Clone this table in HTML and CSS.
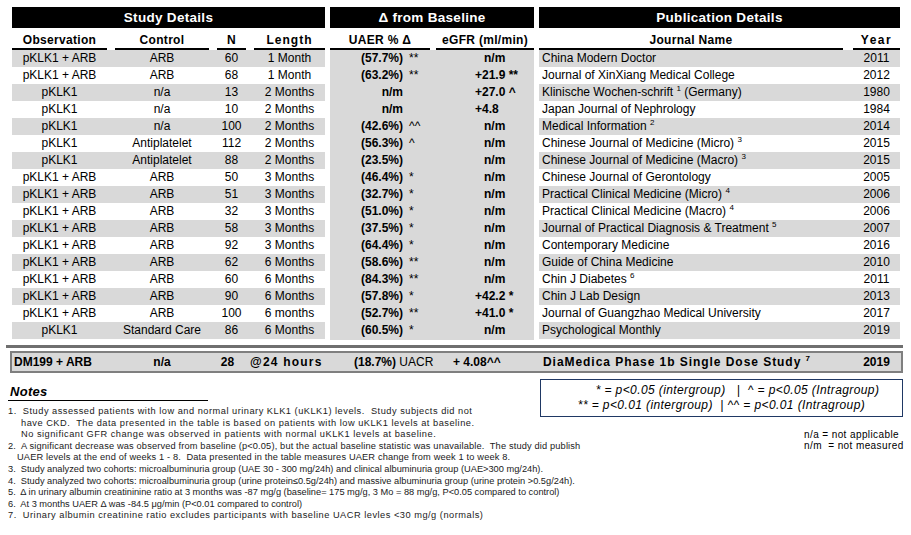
FILE: index.html
```html
<!DOCTYPE html>
<html lang="en">
<head>
<meta charset="utf-8">
<title>Study Summary</title>
<link rel="stylesheet" href="styles.css">
</head>
<body>
<div class="page">
  <div class="table">
    <section class="sec study">
      <div class="bar">Study Details</div>
      <div class="row head"><span>Observation</span><span>Control</span><span>N</span><span class="wide">Length</span></div>
      <div class="row g"><span>pKLK1 + ARB</span><span>ARB</span><span>60</span><span>1 Month</span></div>
      <div class="row"><span>pKLK1 + ARB</span><span>ARB</span><span>68</span><span>1 Month</span></div>
      <div class="row g"><span>pKLK1</span><span>n/a</span><span>13</span><span>2 Months</span></div>
      <div class="row"><span>pKLK1</span><span>n/a</span><span>10</span><span>2 Months</span></div>
      <div class="row g"><span>pKLK1</span><span>n/a</span><span>100</span><span>2 Months</span></div>
      <div class="row"><span>pKLK1</span><span>Antiplatelet</span><span>112</span><span>2 Months</span></div>
      <div class="row g"><span>pKLK1</span><span>Antiplatelet</span><span>88</span><span>2 Months</span></div>
      <div class="row"><span>pKLK1 + ARB</span><span>ARB</span><span>50</span><span>3 Months</span></div>
      <div class="row g"><span>pKLK1 + ARB</span><span>ARB</span><span>51</span><span>3 Months</span></div>
      <div class="row"><span>pKLK1 + ARB</span><span>ARB</span><span>32</span><span>3 Months</span></div>
      <div class="row g"><span>pKLK1 + ARB</span><span>ARB</span><span>58</span><span>3 Months</span></div>
      <div class="row"><span>pKLK1 + ARB</span><span>ARB</span><span>92</span><span>3 Months</span></div>
      <div class="row g"><span>pKLK1 + ARB</span><span>ARB</span><span>62</span><span>6 Months</span></div>
      <div class="row"><span>pKLK1 + ARB</span><span>ARB</span><span>60</span><span>6 Months</span></div>
      <div class="row g"><span>pKLK1 + ARB</span><span>ARB</span><span>90</span><span>6 Months</span></div>
      <div class="row"><span>pKLK1 + ARB</span><span>ARB</span><span>100</span><span>6 months</span></div>
      <div class="row g"><span>pKLK1</span><span>Standard Care</span><span>86</span><span>6 Months</span></div>
    </section>

    <section class="sec delta">
      <div class="bar">Δ from Baseline</div>
      <div class="row head"><span>UAER % Δ</span><span>eGFR (ml/min)</span></div>
      <div class="body">
        <div class="row"><span class="u"><b>(57.7%)</b><i>**</i></span><span class="e nm">n/m</span></div>
        <div class="row"><span class="u"><b>(63.2%)</b><i>**</i></span><span class="e">+21.9 **</span></div>
        <div class="row"><span class="u"><b>n/m</b><i></i></span><span class="e">+27.0 ^</span></div>
        <div class="row"><span class="u"><b>n/m</b><i></i></span><span class="e">+4.8</span></div>
        <div class="row"><span class="u"><b>(42.6%)</b><i>^^</i></span><span class="e nm">n/m</span></div>
        <div class="row"><span class="u"><b>(56.3%)</b><i>^</i></span><span class="e nm">n/m</span></div>
        <div class="row"><span class="u"><b>(23.5%)</b><i></i></span><span class="e nm">n/m</span></div>
        <div class="row"><span class="u"><b>(46.4%)</b><i>*</i></span><span class="e nm">n/m</span></div>
        <div class="row"><span class="u"><b>(32.7%)</b><i>*</i></span><span class="e nm">n/m</span></div>
        <div class="row"><span class="u"><b>(51.0%)</b><i>*</i></span><span class="e nm">n/m</span></div>
        <div class="row"><span class="u"><b>(37.5%)</b><i>*</i></span><span class="e nm">n/m</span></div>
        <div class="row"><span class="u"><b>(64.4%)</b><i>*</i></span><span class="e nm">n/m</span></div>
        <div class="row"><span class="u"><b>(58.6%)</b><i>**</i></span><span class="e nm">n/m</span></div>
        <div class="row"><span class="u"><b>(84.3%)</b><i>**</i></span><span class="e nm">n/m</span></div>
        <div class="row"><span class="u"><b>(57.8%)</b><i>*</i></span><span class="e">+42.2 *</span></div>
        <div class="row"><span class="u"><b>(52.7%)</b><i>**</i></span><span class="e">+41.0 *</span></div>
        <div class="row"><span class="u"><b>(60.5%)</b><i>*</i></span><span class="e nm">n/m</span></div>
      </div>
    </section>

    <section class="sec pub">
      <div class="bar">Publication Details</div>
      <div class="row head"><span>Journal Name</span><span class="wide2">Year</span></div>
      <div class="row g"><span class="j">China Modern Doctor</span><span class="y">2011</span></div>
      <div class="row"><span class="j">Journal of XinXiang Medical College</span><span class="y">2012</span></div>
      <div class="row g"><span class="j">Klinische Wochen-schrift <sup>1</sup> (Germany)</span><span class="y">1980</span></div>
      <div class="row"><span class="j">Japan Journal of Nephrology</span><span class="y">1984</span></div>
      <div class="row g"><span class="j">Medical Information <sup>2</sup></span><span class="y">2014</span></div>
      <div class="row"><span class="j">Chinese Journal of Medicine (Micro) <sup>3</sup></span><span class="y">2015</span></div>
      <div class="row g"><span class="j">Chinese Journal of Medicine (Macro) <sup>3</sup></span><span class="y">2015</span></div>
      <div class="row"><span class="j">Chinese Journal of Gerontology</span><span class="y">2005</span></div>
      <div class="row g"><span class="j">Practical Clinical Medicine (Micro) <sup>4</sup></span><span class="y">2006</span></div>
      <div class="row"><span class="j">Practical Clinical Medicine (Macro) <sup>4</sup></span><span class="y">2006</span></div>
      <div class="row g"><span class="j">Journal of Practical Diagnosis &amp; Treatment <sup>5</sup></span><span class="y">2007</span></div>
      <div class="row"><span class="j">Contemporary Medicine</span><span class="y">2016</span></div>
      <div class="row g"><span class="j">Guide of China Medicine</span><span class="y">2010</span></div>
      <div class="row"><span class="j">Chin J Diabetes <sup>6</sup></span><span class="y">2011</span></div>
      <div class="row g"><span class="j">Chin J Lab Design</span><span class="y">2013</span></div>
      <div class="row"><span class="j">Journal of Guangzhao Medical University</span><span class="y">2017</span></div>
      <div class="row g"><span class="j">Psychological Monthly</span><span class="y">2019</span></div>
    </section>
  </div>

  <div class="sep"></div>

  <div class="dm">
    <span class="c1">DM199 + ARB</span>
    <span class="c2">n/a</span>
    <span class="c3">28</span>
    <span class="c4">@24 hours</span>
    <span class="c5">(18.7%) <span class="reg">UACR</span></span>
    <span class="c6">+ 4.08^^</span>
    <span class="c7">DiaMedica Phase 1b Single Dose Study <sup>7</sup></span>
    <span class="c8">2019</span>
  </div>

  <div class="bottom">
    <div class="notes">
      <div class="notes-title">Notes</div>
      <div class="line wide">1.&nbsp; Study assessed patients with low and normal urinary KLK1 (uKLK1) levels.&nbsp; Study subjects did not</div>
      <div class="line wide in1">have CKD.&nbsp; The data presented in the table is based on patients with low uKLK1 levels at baseline.</div>
      <div class="line wide in1">No significant GFR change was observed in patients with normal uKLK1 levels at baseline.</div>
      <div class="line mid">2.&nbsp; A significant decrease was observed from baseline (p&lt;0.05), but the actual baseline statistic was unavailable.&nbsp; The study did publish</div>
      <div class="line mid in2">UAER levels at the end of weeks 1 - 8.&nbsp; Data presented in the table measures UAER change from week 1 to week 8.</div>
      <div class="line">3.&nbsp; Study analyzed two cohorts: microalbuminuria group (UAE 30 - 300 mg/24h) and clinical albuminuria group (UAE&gt;300 mg/24h).</div>
      <div class="line">4.&nbsp; Study analyzed two cohorts: microalbuminuria group (urine protein≤0.5g/24h) and massive albuminuria group (urine protein &gt;0.5g/24h).</div>
      <div class="line">5.&nbsp; Δ in urinary albumin creatininine ratio at 3 months was -87 mg/g (baseline= 175 mg/g, 3 Mo = 88 mg/g, P&lt;0.05 compared to control)</div>
      <div class="line">6.&nbsp; At 3 months UAER Δ was -84.5 μg/min (P&lt;0.01 compared to control)</div>
      <div class="line wide">7.&nbsp; Urinary albumin creatinine ratio excludes participants with baseline UACR levles &lt;30 mg/g (normals)</div>
    </div>
    <div class="side">
      <div class="legend">
        <div class="l1">* = p&lt;0.05 (intergroup)&nbsp;&nbsp;&nbsp;|&nbsp;&nbsp;^ = p&lt;0.05 (Intragroup)</div>
        <div>** = p&lt;0.01 (intergroup)&nbsp;&nbsp;|&nbsp;^^ = p&lt;0.01 (Intragroup)</div>
      </div>
      <div class="abbr">
        <div>n/a = not applicable</div>
        <div>n/m&nbsp; = not measured</div>
      </div>
    </div>
  </div>
</div>
</body>
</html>
```

FILE: styles.css
```css
* { box-sizing: border-box; }

body {
  margin: 0;
  background: #fff;
  color: #000;
  font-family: "Liberation Sans", Arial, sans-serif;
}

.page {
  width: 911px;
  height: 535px;
  overflow: hidden;
}

.table {
  display: flex;
  gap: 5px;
  margin: 7px 0 0 12px;
  align-items: flex-start;
}

.study { width: 313px; }
.delta { width: 204px; }
.pub { width: 361px; }

.bar {
  background: #000;
  color: #fff;
  font-weight: bold;
  font-size: 13.5px;
  height: 21px;
  line-height: 21px;
  text-align: center;
  letter-spacing: 0.3px;
}

.row {
  display: grid;
  height: 17px;
  line-height: 17px;
  font-size: 12px;
  white-space: nowrap;
}

.row.g { background: #d9d9d9; }

.study .row {
  grid-template-columns: 95px 94px 29px 71px;
  column-gap: 8px;
  text-align: center;
}

.row.head {
  height: 22px;
}

.row.head span {
  display: block;
  padding-top: 5px;
  line-height: 15px;
  border-bottom: 2px solid #000;
  font-weight: bold;
  letter-spacing: 0.3px;
  text-align: center;
}

.row.head .wide { letter-spacing: 1px; }
.row.head .wide2 { letter-spacing: 1.5px; }

/* Delta section */
.delta .row {
  grid-template-columns: 100px 98px;
  column-gap: 6px;
}

.delta .body {
  background: #d9d9d9;
  padding-bottom: 1px;
}

.u {
  display: grid;
  grid-template-columns: 73px auto;
}

.u b {
  text-align: right;
  font-weight: bold;
}

.u i {
  font-style: normal;
  padding-left: 6px;
}

.e {
  padding-left: 39px;
  font-weight: bold;
}

.e.nm { padding-left: 48px; }

/* Publication section */
.pub .row {
  grid-template-columns: 304px 47px;
  column-gap: 10px;
}

.j {
  padding-left: 3px;
  text-align: left;
}

.y { text-align: center; }

sup {
  font-size: 8px;
  line-height: 0;
  vertical-align: 5px;
}

/* Separator and DM row */
.sep {
  height: 3px;
  background: #6f6f6f;
  margin: 5px 8px 0 6px;
}

.dm {
  margin: 3px 8px 0 10px;
  border: 2px solid #7f7f7f;
  background: #d9d9d9;
  display: grid;
  grid-template-columns: 103px 98px 37px 80px 106px 103px 314px 47px;
  font-size: 12px;
  line-height: 18px;
  font-weight: bold;
  white-space: nowrap;
}

.dm .c1 { padding-left: 2px; }
.dm .c2 { text-align: center; padding-right: 4px; }
.dm .c3 { text-align: center; padding-right: 8px; }
.dm .c4 { letter-spacing: 1.2px; }
.dm .c5 { padding-left: 24px; }
.dm .c6 { padding-left: 17px; }
.dm .c7 { padding-left: 4px; letter-spacing: 0.95px; }
.dm .c8 { text-align: center; }
.dm .reg { font-weight: normal; }

/* Bottom */
.bottom {
  display: grid;
  grid-template-columns: minmax(0, 1fr) 363px;
  margin: 6px 8px 0 8px;
}

.notes {
  white-space: nowrap;
}

.notes-title {
  width: 200px;
  padding: 5px 0 0 2px;
  line-height: 16px;
  font-size: 13px;
  font-weight: bold;
  font-style: italic;
  letter-spacing: 0.3px;
  border-bottom: 1px solid #000;
  margin-bottom: 5px;
}

.line {
  font-size: 9.25px;
  line-height: 11.6px;
  color: #1a1a1a;
}

.line.wide { letter-spacing: 0.5px; }
.line.mid { letter-spacing: 0.15px; }

.line.in1 { padding-left: 13px; }
.line.in2 { padding-left: 9px; }

.legend {
  border: 1px solid #1f3864;
  padding: 3px 0;
  font-size: 12px;
  line-height: 15px;
  letter-spacing: 0.4px;
  font-style: italic;
  text-align: center;
  white-space: nowrap;
}

.legend .l1 { padding-left: 32px; }

.abbr {
  margin-top: 12px;
  padding-left: 264px;
  font-size: 10px;
  line-height: 11px;
  letter-spacing: 0.4px;
  white-space: nowrap;
}
```
